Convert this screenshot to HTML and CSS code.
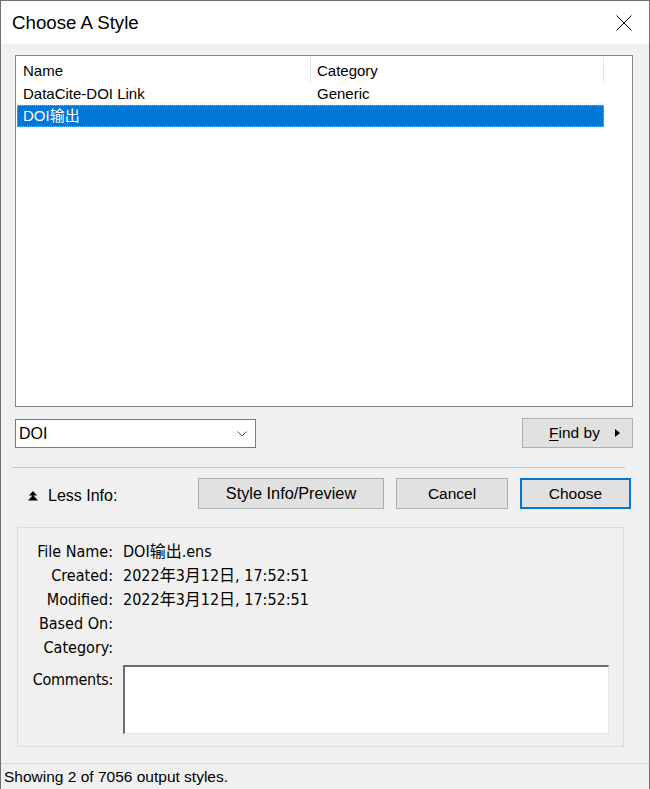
FILE: index.html
```html
<!DOCTYPE html>
<html>
	<head>
		<meta charset="UTF-8">
		<title>Choose A Style</title>
		<link rel="stylesheet" href="styles.css">
	</head>
	<body>
		<div class="window">
			<div class="titlebar">
				<span class="title">Choose A Style</span>
				<svg class="close" width="16" height="16" viewBox="0 0 16 16">
					<path d="M0.5 0.5 L15.5 15.5 M15.5 0.5 L0.5 15.5" stroke="#000" stroke-width="1" fill="none"/>
				</svg>
			</div>

			<div class="content">
				<div class="listbox">
					<div class="row head">
						<div class="cell name">Name</div>
						<div class="cell cat">Category</div>
					</div>
					<div class="row">
						<div class="cell name">DataCite-DOI Link</div>
						<div class="cell cat">Generic</div>
					</div>
					<div class="row selected">
						<div class="cell name">DOI输出</div>
						<div class="cell cat"></div>
					</div>
				</div>

				<div class="search">
					<div class="combo">
						<span>DOI</span>
						<svg width="10" height="6" viewBox="0 0 10 6">
							<path d="M0.5 0.5 L5 5 L9.5 0.5" stroke="#555" fill="none"/>
						</svg>
					</div>
					<div class="btn findby">
						<span><u>F</u>ind by</span>
						<svg width="5" height="8" viewBox="0 0 5 8"><path d="M0 0 L5 4 L0 8 Z" fill="#000"/></svg>
					</div>
				</div>

				<div class="sep"></div>

				<div class="actions">
					<div class="less">
						<svg width="10" height="11" viewBox="0 0 10 11">
							<path d="M5 0 L9 4.5 L1 4.5 Z M5 4 L10 9.5 L0 9.5 Z" fill="#000"/>
						</svg>
						<span>Less Info:</span>
					</div>
					<div class="btn preview">Style Info/Preview</div>
					<div class="btn cancel">Cancel</div>
					<div class="btn choose">Choose</div>
				</div>

				<div class="info">
					<div class="lbl">File Name:</div><div class="val">DOI输出.ens</div>
					<div class="lbl">Created:</div><div class="val">2022年3月12日, 17:52:51</div>
					<div class="lbl">Modified:</div><div class="val">2022年3月12日, 17:52:51</div>
					<div class="lbl">Based On:</div><div class="val"></div>
					<div class="lbl">Category:</div><div class="val"></div>
					<div class="lbl comments">Comments:</div><div class="val"><div class="textarea"></div></div>
				</div>
			</div>

			<div class="status">Showing 2 of 7056 output styles.</div>
		</div>
	</body>
</html>
```

FILE: styles.css
```css
body {
	margin: 0;
	background-color: #f0f0f0;
	font-family: "Liberation Sans", "Noto Sans CJK SC", sans-serif;
	font-size: 15px;
	color: #000;
}

.window {
	width: 650px;
	height: 789px;
	box-sizing: border-box;
	border: 1px solid #707070;
	border-bottom: none;
	background-color: #f0f0f0;
	display: flex;
	flex-direction: column;
}

.titlebar {
	height: 43px;
	background-color: #fff;
	display: flex;
	align-items: center;
	justify-content: space-between;
	padding: 0 17px 0 11px;
}

.title {
	font-size: 18.7px;
}

.content {
	padding: 11px 16px 0 14px;
	flex: 1;
}

.listbox {
	height: 350px;
	border: 1px solid #828790;
	background-color: #fff;
}

.row {
	display: flex;
	height: 22px;
	line-height: 21px;
	margin-left: 1px;
	width: 587px;
	box-sizing: border-box;
}

.row.head {
	height: 27px;
	width: 588px;
}

.cell {
	box-sizing: border-box;
	padding-left: 6px;
	white-space: nowrap;
}

.cell.name {
	width: 294px;
}

.head .cell {
	border-right: 1px solid #e5e5e5;
	height: 25px;
	line-height: 28px;
	margin-top: 1px;
}

.head .cell.cat {
	width: 293px;
}

.row.selected {
	background-color: #0078d7;
	color: #fff;
	border: 1px dotted #f29b3c;
	line-height: 20px;
}

.row.selected .cell {
	padding-left: 5px;
}

.search {
	display: flex;
	justify-content: space-between;
	align-items: flex-start;
	margin-top: 12px;
}

.combo {
	width: 241px;
	height: 29px;
	box-sizing: border-box;
	border: 1px solid #7a7a7a;
	background-color: #fff;
	display: flex;
	align-items: center;
	justify-content: space-between;
	padding: 0 8px 0 3px;
	font-size: 16px;
}

.btn {
	box-sizing: border-box;
	background-color: #e1e1e1;
	border: 1px solid #adadad;
	display: flex;
	align-items: center;
	justify-content: center;
	height: 31px;
	font-size: 15.5px;
}

.findby {
	width: 111px;
	height: 30px;
	margin-top: -1px;
	gap: 15px;
	padding-left: 14px;
}

.findby u {
	text-decoration-thickness: 1px;
	text-underline-offset: 2px;
}

.sep {
	height: 1px;
	background-color: #c9c9c9;
	margin: 19px 8px 0 -3px;
}

.actions {
	display: flex;
	align-items: center;
	margin-top: 10px;
}

.less {
	display: flex;
	align-items: center;
	gap: 10px;
	padding-left: 13px;
	width: 170px;
	margin-top: 5px;
	font-size: 16px;
}

.preview {
	width: 186px;
	font-size: 16.3px;
}

.cancel {
	width: 112px;
	margin-left: 12px;
}

.choose {
	width: 111px;
	margin-left: 12px;
	border: 2px solid #0078d7;
}

.info {
	margin: 18px 9px 0 2px;
	height: 220px;
	box-sizing: border-box;
	border: 1px solid #dcdcdc;
	display: grid;
	grid-template-columns: 95px 1fr;
	grid-auto-rows: 24px;
	column-gap: 10px;
	padding: 12px 14px 0 0;
	font-family: "Liberation Sans Narrow", "DejaVu Sans Condensed", "Liberation Sans", "Noto Sans CJK SC", sans-serif;
	font-size: 16px;
	line-height: 24px;
}

.lbl {
	text-align: right;
}

.lbl.comments,
.info .val:last-child {
	margin-top: 5px;
}

.lbl.comments {
	padding-top: 3px;
	letter-spacing: -0.3px;
}

.textarea {
	height: 69px;
	box-sizing: border-box;
	background-color: #fff;
	border: 1px solid #e3e3e3;
	border-top: 2px solid #6d6d6d;
	border-left: 2px solid #6d6d6d;
}

.status {
	border-top: 1px solid #d9d9d9;
	height: 25px;
	line-height: 25px;
	padding-left: 3px;
	font-size: 15.5px;
	margin-top: 16px;
}
```
